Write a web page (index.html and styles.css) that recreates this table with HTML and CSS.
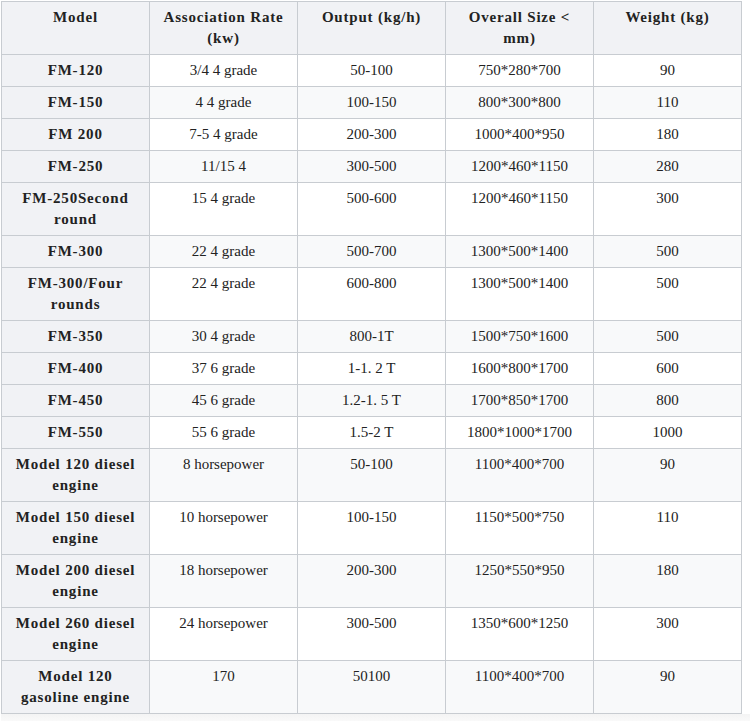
FILE: index.html
```html
<!DOCTYPE html>
<html>
<head>
<meta charset="utf-8">
<link rel="stylesheet" href="styles.css">
</head>
<body>
<div class="page">
<table class="spec">
<colgroup><col class="c"><col class="c"><col class="c"><col class="c"><col class="c"></colgroup>
<thead>
<tr><th>Model</th><th>Association Rate (kw)</th><th>Output (kg/h)</th><th>Overall Size &lt; mm)</th><th>Weight (kg)</th></tr>
</thead>
<tbody>
<tr><th>FM-120</th><td>3/4 4 grade</td><td>50-100</td><td>750*280*700</td><td>90</td></tr>
<tr><th>FM-150</th><td>4 4 grade</td><td>100-150</td><td>800*300*800</td><td>110</td></tr>
<tr><th>FM 200</th><td>7-5 4 grade</td><td>200-300</td><td>1000*400*950</td><td>180</td></tr>
<tr><th>FM-250</th><td>11/15 4</td><td>300-500</td><td>1200*460*1150</td><td>280</td></tr>
<tr><th>FM-250Second round</th><td>15 4 grade</td><td>500-600</td><td>1200*460*1150</td><td>300</td></tr>
<tr><th>FM-300</th><td>22 4 grade</td><td>500-700</td><td>1300*500*1400</td><td>500</td></tr>
<tr><th>FM-300/Four rounds</th><td>22 4 grade</td><td>600-800</td><td>1300*500*1400</td><td>500</td></tr>
<tr><th>FM-350</th><td>30 4 grade</td><td>800-1T</td><td>1500*750*1600</td><td>500</td></tr>
<tr><th>FM-400</th><td>37 6 grade</td><td>1-1. 2 T</td><td>1600*800*1700</td><td>600</td></tr>
<tr><th>FM-450</th><td>45 6 grade</td><td>1.2-1. 5 T</td><td>1700*850*1700</td><td>800</td></tr>
<tr><th>FM-550</th><td>55 6 grade</td><td>1.5-2 T</td><td>1800*1000*1700</td><td>1000</td></tr>
<tr><th>Model 120 diesel engine</th><td>8 horsepower</td><td>50-100</td><td>1100*400*700</td><td>90</td></tr>
<tr><th>Model 150 diesel engine</th><td>10 horsepower</td><td>100-150</td><td>1150*500*750</td><td>110</td></tr>
<tr><th>Model 200 diesel engine</th><td>18 horsepower</td><td>200-300</td><td>1250*550*950</td><td>180</td></tr>
<tr><th>Model 260 diesel engine</th><td>24 horsepower</td><td>300-500</td><td>1350*600*1250</td><td>300</td></tr>
<tr><th>Model 120 gasoline engine</th><td>170</td><td>50100</td><td>1100*400*700</td><td>90</td></tr>
</tbody>
</table>
<div class="foot"></div>
</div>
</body>
</html>
```
FILE: styles.css
```css
html, body {
  margin: 0;
  padding: 0;
  background: #ffffff;
}
.page {
  padding: 1px 0 0 1px;
}
.spec {
  border-collapse: collapse;
  table-layout: fixed;
  width: 740px;
  font-family: "Liberation Serif", "DejaVu Serif", serif;
  font-size: 15px;
  line-height: 21px;
  color: #222222;
  background: #f8f9fa;
  border: 1px solid #c8ccd1;
}
.spec .c {
  width: 148px;
}
.spec th,
.spec td {
  border: 1px solid #c8ccd1;
  padding: 5px 8px 5px;
  text-align: center;
  vertical-align: top;
}
.spec th {
  background: #f1f2f5;
  font-weight: bold;
  letter-spacing: 0.8px;
}
.spec thead th {
  background: #f1f2f5;
}
.spec tbody tr:nth-child(odd) td {
  background: #ffffff;
}
.spec tbody tr:nth-child(even) td {
  background: #f8f9fa;
}
.foot {
  height: 8px;
  background: linear-gradient(#f4f4f4, #fafafa);
}
```
